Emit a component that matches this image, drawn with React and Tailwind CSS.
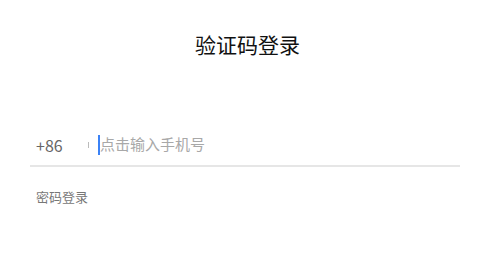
export default function App() {
  const font = { fontFamily: '"Noto Sans CJK SC", "Noto Sans", sans-serif' };
  return (
    <div className="w-[495px] h-[273px] bg-white" style={font}>
      <div className="pt-[29px] text-center text-[21px] leading-[30px] text-[#111]">验证码登录</div>
      <div className="mt-[65px] ml-[30px] mr-[35px] border-b-2 border-[#e6e6e6] h-[43px] flex items-center">
        <span className="pl-[6px] w-[58px] text-[16px] text-[#666] mt-[1px]">+86</span>
        <span className="w-px h-[6px] bg-[#bbb] mt-[1px]" />
        <div className="ml-[9px] flex items-center">
          <span className="w-[2px] h-[20px] bg-[#3b82f6]" />
          <span className="text-[15px] text-[#a8a8a8]">点击输入手机号</span>
        </div>
      </div>
      <div className="mt-[21px] pl-[36px] text-[13px] leading-[18px] text-[#777]">密码登录</div>
    </div>
  );
}
